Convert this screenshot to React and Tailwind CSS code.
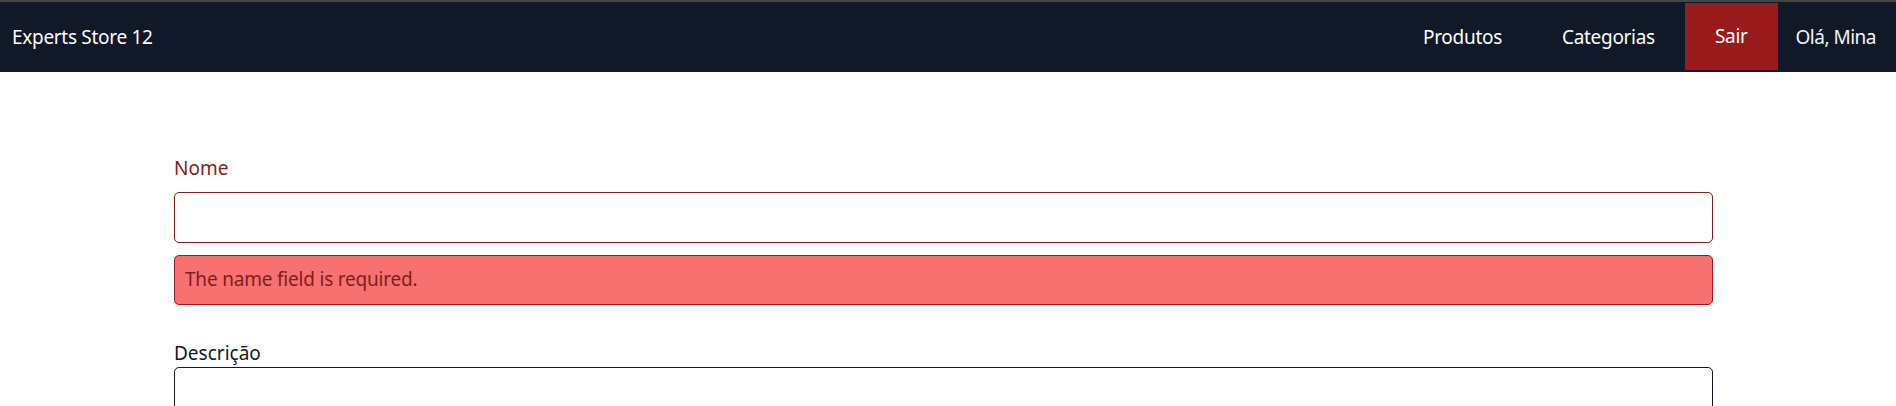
export default function App() {
  const font = { fontFamily: '"Noto Sans", "Open Sans", sans-serif' };
  return (
    <div className="min-h-[406px] bg-white" style={font}>
      <div className="h-[2px] bg-[#454545]" />
      <nav className="flex h-[70px] items-stretch justify-between bg-[#111827] text-[19px] tracking-[-0.3px] text-white">
        <div className="flex items-center pl-[12px]">Experts Store 12</div>
        <div className="flex items-stretch">
          <a className="flex items-center px-[30px]">Produtos</a>
          <a className="flex items-center px-[30px]">Categorias</a>
          <a className="mt-[1px] mb-[2px] flex items-center bg-[#991b1b] px-[30px]">Sair</a>
          <span className="flex items-center pl-[18px] pr-[20px] tracking-[-0.5px] text-gray-100">Olá, Mina</span>
        </div>
      </nav>
      <form className="ml-[174px] w-[1539px] pt-[82px]">
        <div className="flex flex-col">
          <label className="text-[19px] leading-[28.5px] text-[#7f1d1d]">Nome</label>
          <input className="mt-[9px] h-[51px] rounded-[5px] border border-[#7f1d1d] bg-white px-3 outline-none" />
          <div className="mt-[12px] flex h-[50px] items-center rounded-[5px] border border-[#991b1b] bg-[#f87171] px-[10px] text-[19px] tracking-[-0.2px] text-[#7f1d1d]">
            The name field is required.
          </div>
        </div>
        <div className="mt-[34px] flex flex-col">
          <label className="text-[19px] leading-[28.5px] text-[#111827]">Descrição</label>
          <textarea className="h-[100px] rounded-[5px] border border-[#111827] bg-white px-3 outline-none" />
        </div>
      </form>
    </div>
  );
}
